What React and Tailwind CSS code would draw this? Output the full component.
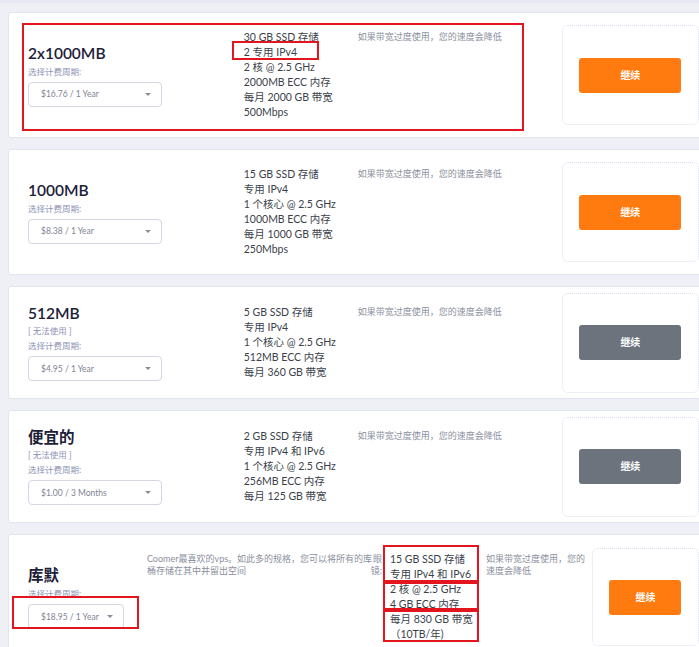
import React from 'react';

const FONT = { fontFamily: 'Lato, "Noto Sans CJK SC", sans-serif' };

const PLANS = [
  {
    title: '2x1000MB',
    price: '$16.76 / 1 Year',
    features: ['30 GB SSD 存储', '2 专用 IPv4', '2 核 @ 2.5 GHz', '2000MB ECC 内存', '每月 2000 GB 带宽', '500Mbps'],
    available: true,
    marked: true,
  },
  {
    title: '1000MB',
    price: '$8.38 / 1 Year',
    features: ['15 GB SSD 存储', '专用 IPv4', '1 个核心 @ 2.5 GHz', '1000MB ECC 内存', '每月 1000 GB 带宽', '250Mbps'],
    available: true,
  },
  {
    title: '512MB',
    price: '$4.95 / 1 Year',
    features: ['5 GB SSD 存储', '专用 IPv4', '1 个核心 @ 2.5 GHz', '512MB ECC 内存', '每月 360 GB 带宽'],
    available: false,
  },
  {
    title: '便宜的',
    price: '$1.00 / 3 Months',
    features: ['2 GB SSD 存储', '专用 IPv4 和 IPv6', '1 个核心 @ 2.5 GHz', '256MB ECC 内存', '每月 125 GB 带宽'],
    available: false,
  },
];

function Line({ children, className = '' }) {
  return <div className={`h-[15px] leading-[15px] whitespace-nowrap overflow-visible ${className}`}>{children}</div>;
}

function Small({ children, className = '' }) {
  return <div className={`h-[10px] leading-[10px] text-[8.5px] text-[#8c93b5] whitespace-nowrap ${className}`}>{children}</div>;
}

function Select({ price, wide = true }) {
  return (
    <div
      className={`mt-[5px] flex items-center justify-between h-[25px] rounded-[4px] border border-[#d3d6e4] bg-white pl-[12px] pr-[10px] ${
        wide ? 'w-[134px]' : 'w-[96px]'
      }`}
    >
      <span className="text-[8.5px] leading-[10px] text-[#7f8394]">{price}</span>
      <span className="w-0 h-0 border-l-[3px] border-r-[3px] border-t-[3px] border-l-transparent border-r-transparent border-t-[#8a8d99]" />
    </div>
  );
}

function Button({ available, wide = true }) {
  return (
    <div
      className={`h-[35px] rounded-[3px] flex items-center justify-center text-[10px] font-bold text-white ${
        available ? 'bg-[#ff7b0f]' : 'bg-[#6c737d]'
      } ${wide ? 'w-[102px]' : 'w-[72px]'}`}
    >
      继续
    </div>
  );
}

function Features({ items }) {
  return (
    <div className="flex flex-col text-[10.5px] text-[#3b3f4c]">
      {items.map((f) => (
        <Line key={f}>{f}</Line>
      ))}
    </div>
  );
}

function Desc({ lines, className = '' }) {
  return (
    <div className={`pt-[1px] text-[9px] text-[#8b909e] ${className}`}>
      {lines.map((l) => (
        <div key={l} className="h-[12px] leading-[12px] whitespace-nowrap">
          {l}
        </div>
      ))}
    </div>
  );
}

function PlanCard({ plan }) {
  return (
    <div className="relative flex items-center w-[712px] ml-[8px] bg-white border border-[#e1e5ee] rounded-[3px] pl-[19px] pr-[20px] py-[17px]">
      <div className="w-[217px] flex flex-col">
        <div className="h-[18px] leading-[18px] text-[15.5px] font-semibold text-[#1c2038]">{plan.title}</div>
        {!plan.available && <Small className="mt-[4px]">[ 无法使用 ]</Small>}
        <Small className="mt-[5px]">选择计费周期:</Small>
        <Select price={plan.price} />
      </div>
      <div className="flex items-start">
        <div className="w-[114px]">
          <Features items={plan.features} />
        </div>
        <Desc className="w-[204px]" lines={['如果带宽过度使用，您的速度会降低']} />
      </div>
      <div className="w-[138px] h-[100px] -my-[20px] flex items-center justify-center rounded-[6px] border border-dotted border-[#d9deec]">
        <Button available={plan.available} />
      </div>
      {plan.marked && (
        <>
          <div className="absolute left-[13px] top-[10px] w-[502px] h-[108px] border-2 border-[#e3161f]" />
          <div className="absolute left-[223px] top-[28px] w-[87px] h-[19px] border-2 border-[#e3161f]" />
        </>
      )}
    </div>
  );
}

function KumoCard() {
  return (
    <div className="relative flex items-center w-[712px] ml-[8px] bg-white border border-[#e1e5ee] rounded-[3px] pl-[19px] pr-[20px] py-[17px]">
      <div className="w-[120px] flex flex-col pt-[1px]">
        <div className="h-[18px] leading-[18px] text-[15.5px] font-semibold text-[#1c2038]">库默</div>
        <Small className="mt-[5px]">选择计费周期:</Small>
        <Select price="$18.95 / 1 Year" wide={false} />
      </div>
      <div className="flex items-start">
        <Desc
          className="w-[220px] text-[8.6px]"
          lines={['Coomer最喜欢的vps。如此多的规格，您可以将所有的库', '桶存储在其中并留出空间']}
        />
        <Desc className="w-[15px] text-right" lines={['眼', '镜:']} />
        <div className="w-[104px] pl-[8px]">
          <Features items={['15 GB SSD 存储', '专用 IPv4 和 IPv6', '2 核 @ 2.5 GHz', '4 GB ECC 内存', '每月 830 GB 带宽', '（10TB/年)']} />
        </div>
        <Desc className="w-[106px]" lines={['如果带宽过度使用，您的', '速度会降低']} />
      </div>
      <div className="w-[108px] h-[98px] -my-[20px] flex items-center justify-center rounded-[6px] border border-dotted border-[#d9deec]">
        <Button available wide={false} />
      </div>
      <div className="absolute left-[3px] top-[61px] w-[127px] h-[33px] border-2 border-[#e3161f]" />
      <div className="absolute left-[374px] top-[10px] w-[96px] h-[37px] border-2 border-[#e3161f]" />
      <div className="absolute left-[374px] top-[47px] w-[96px] h-[28px] border-2 border-[#e3161f]" />
      <div className="absolute left-[374px] top-[75px] w-[96px] h-[32px] border-2 border-[#e3161f]" />
    </div>
  );
}

export default function App() {
  return (
    <div style={FONT} className="w-[699px] h-[647px] overflow-hidden bg-[#eef0f5]">
      <div className="h-[3px] bg-[#e6e9f1]" />
      <div className="flex flex-col gap-[11px] pt-[9px]">
        {PLANS.map((p) => (
          <PlanCard key={p.title} plan={p} />
        ))}
        <KumoCard />
      </div>
    </div>
  );
}
